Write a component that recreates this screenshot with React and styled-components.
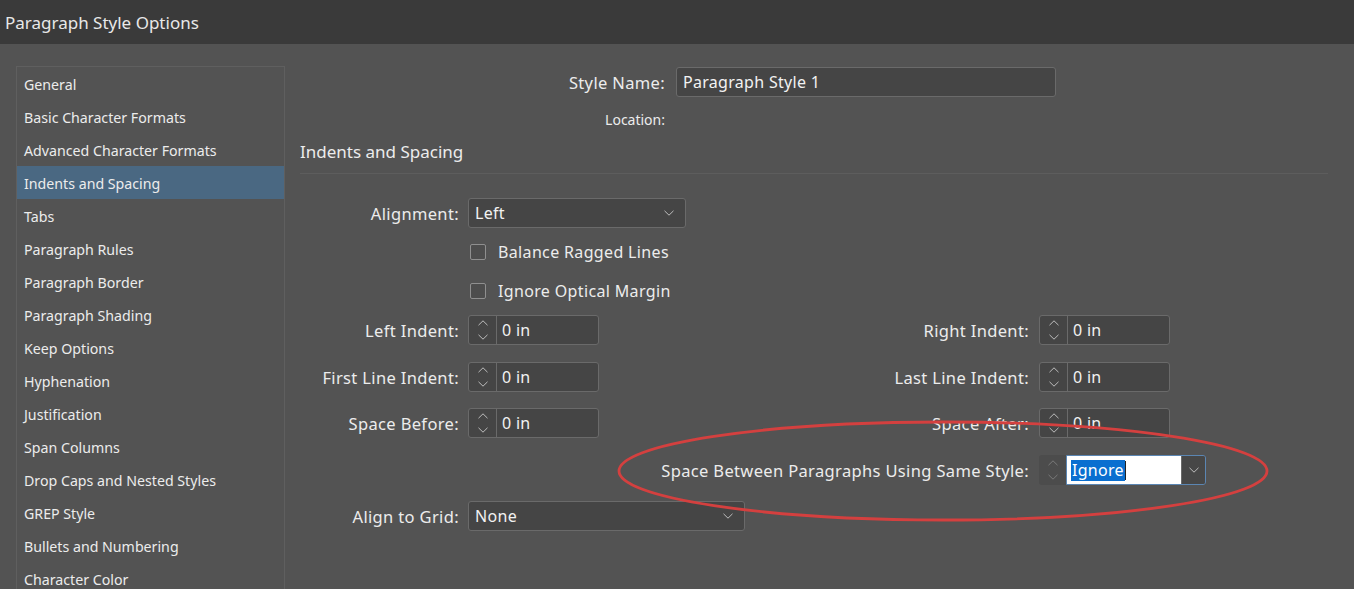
import React from "react";
import styled, { createGlobalStyle } from "styled-components";

const GlobalStyle = createGlobalStyle`
  html, body {
    margin: 0;
    padding: 0;
    background: #535353;
  }
  body {
    font-family: "Noto Sans", "Open Sans", sans-serif;
    color: #ececec;
  }
`;

const Window = styled.div`
  position: relative;
  width: 1354px;
  height: 589px;
  overflow: hidden;
  background: #535353;
  display: flex;
  flex-direction: column;
`;

const TitleBar = styled.div`
  height: 44px;
  flex: none;
  background: #3a3a3a;
  display: flex;
  align-items: center;
  padding-left: 5px;
  font-size: 17px;
  color: #e8e8e8;
`;

const Body = styled.div`
  flex: 1;
  display: flex;
  padding-left: 16px;
  min-height: 0;
`;

const Sidebar = styled.div`
  width: 269px;
  box-sizing: border-box;
  flex: none;
  margin-top: 22px;
  border: 1px solid #5f5f5f;
  border-bottom: none;
  display: flex;
  flex-direction: column;
`;

const SideItem = styled.div`
  height: 33px;
  flex: none;
  display: flex;
  align-items: center;
  padding-left: 7px;
  padding-top: 1px;
  box-sizing: border-box;
  font-size: 14.2px;
  color: #ececec;
  background: ${(p) => (p.$active ? "#4a6882" : "transparent")};
`;

const Main = styled.div`
  flex: 1;
  margin-left: 15px;
  padding-right: 26px;
  display: flex;
  flex-direction: column;
`;

const Row = styled.div`
  display: flex;
  align-items: center;
  height: ${(p) => p.$h || 30}px;
  margin-top: ${(p) => p.$mt || 0}px;
  flex: none;
`;

const Label = styled.div`
  width: ${(p) => p.$w || 159}px;
  margin-right: ${(p) => p.$gap ?? 9}px;
  flex: none;
  text-align: right;
  font-size: ${(p) => p.$size || 16.5}px;
  letter-spacing: ${(p) => (p.$size ? 0 : 0.35)}px;
  color: #ececec;
  white-space: nowrap;
`;

const Heading = styled.div`
  margin-top: 13px;
  height: 22px;
  line-height: 22px;
  font-size: 17px;
  color: #ececec;
`;

const Separator = styled.div`
  margin-top: 10px;
  border-top: 1px solid #5d5d5d;
  flex: none;
`;

const TextBox = styled.div`
  width: ${(p) => p.$w}px;
  height: 30px;
  box-sizing: border-box;
  background: #454545;
  border: 1px solid #6a6a6a;
  border-radius: 3px;
  display: flex;
  align-items: center;
  padding-left: 6px;
  font-size: 16px;
  letter-spacing: 0.3px;
  color: #f2f2f2;
`;

const SelectBox = styled(TextBox)`
  justify-content: space-between;
  padding-right: 11px;
`;

const Spinner = styled.div`
  display: flex;
  width: 131px;
  height: 30px;
  box-sizing: border-box;
  border: 1px solid #6a6a6a;
  border-radius: 3px;
  background: #454545;
  overflow: hidden;
`;

const SpinButtons = styled.div`
  width: 27px;
  flex: none;
  border-right: 1px solid #6a6a6a;
  display: flex;
  flex-direction: column;
  align-items: center;
  justify-content: center;
  gap: 8px;
`;

const SpinValue = styled.div`
  flex: 1;
  display: flex;
  align-items: center;
  padding-left: 5px;
  font-size: 16px;
  letter-spacing: 0.3px;
  color: #f2f2f2;
`;

const DisabledSpin = styled.div`
  width: 27px;
  height: 30px;
  flex: none;
  background: #4c4c4c;
  border-radius: 3px 0 0 3px;
  display: flex;
  flex-direction: column;
  align-items: center;
  justify-content: center;
  gap: 8px;
`;

const ComboBox = styled.div`
  display: flex;
  width: 140px;
  height: 30px;
  box-sizing: border-box;
  border: 1px solid #5b86b3;
  border-radius: 0 3px 3px 0;
  overflow: hidden;
`;

const ComboInput = styled.div`
  width: 110px;
  background: #ffffff;
  display: flex;
  align-items: center;
  padding-left: 4px;
  font-size: 16px;
  letter-spacing: 0.3px;
`;

const Selected = styled.span`
  background: #0a6fd0;
  color: #ffffff;
  line-height: 21px;
  padding: 0 1px;
`;

const Caret = styled.span`
  display: inline-block;
  width: 1px;
  height: 19px;
  background: #222;
`;

const ComboArrow = styled.div`
  flex: 1;
  background: #474747;
  display: flex;
  align-items: center;
  justify-content: center;
  border-left: 1px solid #6a6a6a;
`;

const CheckRow = styled(Row)`
  padding-left: 168px;
`;

const Checkbox = styled.div`
  width: 16px;
  height: 16px;
  box-sizing: border-box;
  border: 1px solid #8f8f8f;
  border-radius: 2px;
  background: #4d4d4d;
  margin-right: 12px;
  margin-left: 2px;
`;

const CheckText = styled.div`
  font-size: 16px;
  letter-spacing: 0.35px;
  color: #ececec;
`;

const Overlay = styled.svg`
  position: absolute;
  left: 0;
  top: 0;
  pointer-events: none;
`;

const Chevron = ({ dir = "down", color = "#bdbdbd", w = 10 }) => (
  <svg width={w} height={w / 2 + 1} viewBox="0 0 10 6" fill="none">
    <polyline
      points={dir === "down" ? "0.5,0.8 5,5.2 9.5,0.8" : "0.5,5.2 5,0.8 9.5,5.2"}
      stroke={color}
      strokeWidth="1"
    />
  </svg>
);

const SpinArrows = ({ color }) => (
  <>
    <Chevron dir="up" color={color} w={10} />
    <Chevron dir="down" color={color} w={10} />
  </>
);

const SpinField = ({ value }) => (
  <Spinner>
    <SpinButtons>
      <SpinArrows color="#bdbdbd" />
    </SpinButtons>
    <SpinValue>{value}</SpinValue>
  </Spinner>
);

const sideItems = [
  "General",
  "Basic Character Formats",
  "Advanced Character Formats",
  "Indents and Spacing",
  "Tabs",
  "Paragraph Rules",
  "Paragraph Border",
  "Paragraph Shading",
  "Keep Options",
  "Hyphenation",
  "Justification",
  "Span Columns",
  "Drop Caps and Nested Styles",
  "GREP Style",
  "Bullets and Numbering",
  "Character Color",
];

const pairs = [
  ["Left Indent:", "Right Indent:", 14],
  ["First Line Indent:", "Last Line Indent:", 17],
  ["Space Before:", "Space After:", 16],
];

export default function App() {
  return (
    <Window>
      <GlobalStyle />
      <TitleBar>Paragraph Style Options</TitleBar>
      <Body>
        <Sidebar>
          {sideItems.map((item) => (
            <SideItem key={item} $active={item === "Indents and Spacing"}>
              {item}
            </SideItem>
          ))}
        </Sidebar>
        <Main>
          <Row $mt={23}>
            <Label $w={365} $gap={11}>Style Name:</Label>
            <TextBox $w={380}>Paragraph Style 1</TextBox>
          </Row>
          <Row $mt={13} $h={18}>
            <Label $w={365} $size={14}>Location:</Label>
          </Row>
          <Heading>Indents and Spacing</Heading>
          <Separator />
          <Row $mt={24}>
            <Label>Alignment:</Label>
            <SelectBox $w={218}>
              Left
              <Chevron />
            </SelectBox>
          </Row>
          <CheckRow $mt={14} $h={20}>
            <Checkbox />
            <CheckText>Balance Ragged Lines</CheckText>
          </CheckRow>
          <CheckRow $mt={19} $h={20}>
            <Checkbox />
            <CheckText>Ignore Optical Margin</CheckText>
          </CheckRow>
          {pairs.map(([left, right, mt]) => (
            <Row key={left} $mt={mt}>
              <Label>{left}</Label>
              <SpinField value="0 in" />
              <Label $w={430} $gap={10}>{right}</Label>
              <SpinField value="0 in" />
            </Row>
          ))}
          <Row $mt={17}>
            <Label $w={729} $gap={10}>Space Between Paragraphs Using Same Style:</Label>
            <DisabledSpin>
              <SpinArrows color="#7a7a7a" />
            </DisabledSpin>
            <ComboBox>
              <ComboInput>
                <Selected>Ignore</Selected>
                <Caret />
              </ComboInput>
              <ComboArrow>
                <Chevron />
              </ComboArrow>
            </ComboBox>
          </Row>
          <Row $mt={16}>
            <Label>Align to Grid:</Label>
            <SelectBox $w={277}>
              None
              <Chevron />
            </SelectBox>
          </Row>
        </Main>
      </Body>
      <Overlay width="1354" height="589">
        <ellipse
          cx="943"
          cy="471"
          rx="324"
          ry="49"
          fill="none"
          stroke="#d4403f"
          strokeWidth="2.8"
        />
      </Overlay>
    </Window>
  );
}
